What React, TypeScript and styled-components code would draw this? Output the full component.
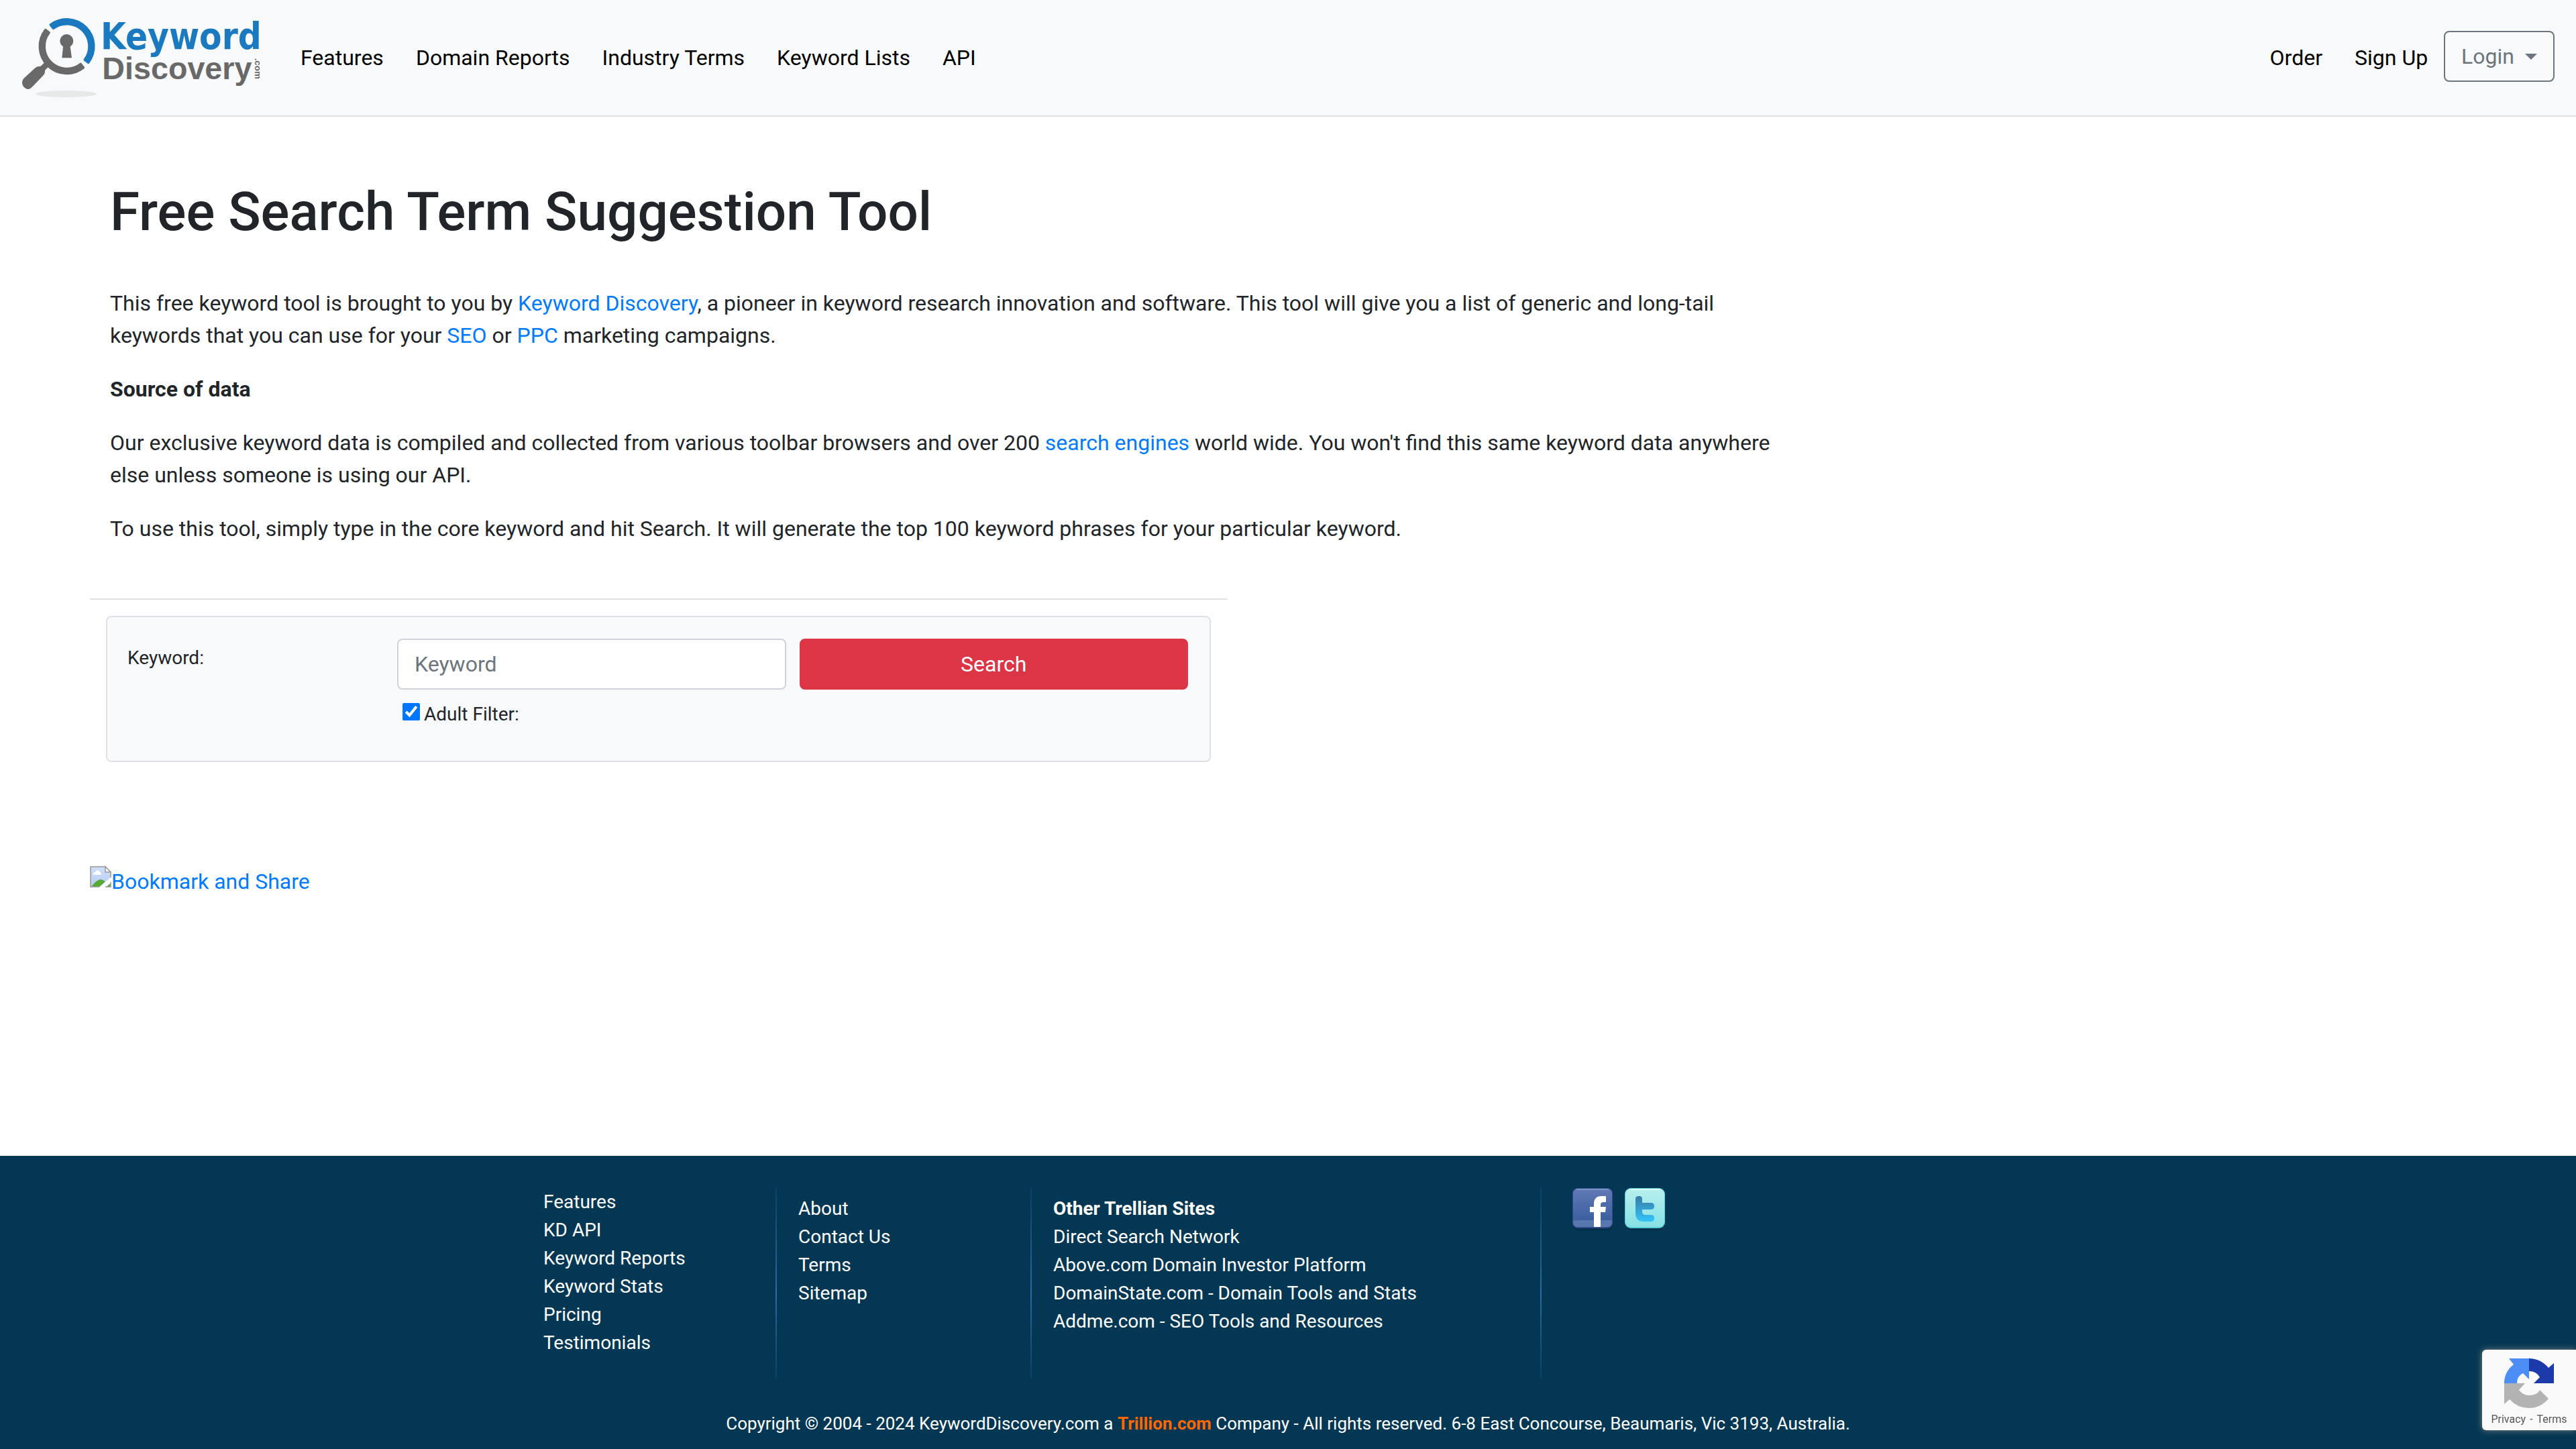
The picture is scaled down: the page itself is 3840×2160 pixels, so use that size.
import React from "react";
import styled, { createGlobalStyle } from "styled-components";

const GlobalStyle = createGlobalStyle`
  *, *::before, *::after { box-sizing: border-box; }
  body {
    margin: 0;
    background: #fff;
    color: #212529;
    font-family: Roboto, "Liberation Sans", sans-serif;
    font-size: 32px;
    line-height: 48px;
  }
`;

const Page = styled.div`
  display: flex;
  flex-direction: column;
  min-height: 100vh;
`;

const Header = styled.header`
  display: flex;
  align-items: center;
  padding: 16px 32px;
  background: #f8f9fa;
  border-bottom: 2px solid #dee2e6;
`;

const Brand = styled.a`
  display: flex;
  margin-right: 26px;
`;

const Nav = styled.nav<{ $end?: boolean }>`
  display: flex;
  align-items: center;
  margin-left: ${(p) => (p.$end ? "auto" : "0")};
`;

const NavLink = styled.a`
  padding: 16px 24px;
  color: #000;
  text-decoration: none;
`;

const LoginButton = styled.button`
  display: flex;
  align-items: center;
  gap: 16px;
  margin-bottom: 4px;
  padding: 12px 24px;
  border: 2px solid #6c757d;
  border-radius: 8px;
  background: transparent;
  color: #6c757d;
  font: inherit;
`;

const Caret = styled.span`
  border: 9px solid transparent;
  border-top-color: #6c757d;
  border-bottom: 0;
`;

const Main = styled.main`
  padding: 94px 134px;
`;

const Intro = styled.section`
  max-width: 2560px;
  padding: 0 30px;
`;

const Title = styled.h1`
  margin: 0 0 64px;
  font-size: 80px;
  line-height: 96px;
  font-weight: 500;
`;

const Paragraph = styled.p`
  margin: 0 0 32px;
`;

const Link = styled.a`
  color: #007bff;
  text-decoration: none;
`;

const ToolSection = styled.section`
  max-width: 1695px;
  margin-top: 80px;
  padding: 24px 24px 0;
  border-top: 2px solid #dee2e6;
`;

const SearchForm = styled.form`
  display: grid;
  grid-template-columns: 382px 1fr 1fr;
  column-gap: 20px;
  row-gap: 16px;
  align-items: start;
  padding: 32px 32px 48px 30px;
  border: 2px solid #dee2e6;
  border-radius: 8px;
  background: #f8f9fa;
`;

const FieldLabel = styled.label`
  padding-top: 8px;
  font-size: 28px;
  line-height: 42px;
`;

const KeywordInput = styled.input`
  min-width: 0;
  padding: 12px 24px;
  border: 2px solid #ced4da;
  border-radius: 8px;
  background: #fff;
  color: #495057;
  font: inherit;
  height: 76px;
  &::placeholder { color: #6c757d; opacity: 1; }
`;

const SearchButton = styled.button`
  height: 76px;
  padding: 12px 24px;
  border: 2px solid #dc3545;
  border-radius: 8px;
  background: #dc3545;
  color: #fff;
  font: inherit;
`;

const FilterLabel = styled.label`
  grid-column: 2;
  display: flex;
  align-items: flex-start;
  font-size: 28px;
  line-height: 42px;
`;

const Checkbox = styled.input`
  width: 26px;
  height: 26px;
  margin: 4px 6px 0 8px;
  accent-color: #0075ff;
`;

const ShareLink = styled(Link)`
  display: inline-flex;
  align-items: flex-start;
  margin-top: 154px;
`;

const Footer = styled.footer`
  margin-top: auto;
  padding: 48px 0 18px;
  background: #043753;
  color: #fff;
  font-size: 28px;
  line-height: 42px;
`;

const FooterGrid = styled.div`
  display: grid;
  grid-template-columns: 1fr 1fr 2fr 2fr;
  max-width: 2280px;
  min-height: 284px;
  margin: 0 auto 48px;
`;

const FooterColumn = styled.div<{ $top: number }>`
  display: flex;
  flex-direction: column;
  align-items: flex-start;
  margin-right: 2px;
  padding: ${(p) => p.$top}px 28px 0 30px;
  border-right: 2px solid;
  border-image: linear-gradient(#0c4063, #306aa4 55%, #0c4063) 1;
`;

const FooterLink = styled.a`
  color: #fff;
  text-decoration: none;
`;

const Social = styled.div`
  display: flex;
  align-items: flex-start;
  gap: 16px;
  padding-left: 43px;
`;

const SocialLink = styled.a`
  display: flex;
`;

const Copyright = styled.p`
  margin: 0;
  text-align: center;
  font-size: 26px;
  line-height: 39px;
`;

const Company = styled.a`
  color: #ff6600;
  font-weight: 700;
  text-decoration: none;
`;

const Captcha = styled.aside`
  position: fixed;
  right: 0;
  bottom: 28px;
  display: flex;
  flex-direction: column;
  align-items: center;
  width: 140px;
  height: 120px;
  padding-top: 12px;
  border-radius: 6px 0 0 6px;
  background: #f9f9f9;
  box-shadow: 0 0 10px #808080;
  color: #555;
  font-size: 16px;
  line-height: 20px;
`;

const CaptchaLinks = styled.div`
  display: flex;
  gap: 6px;
  margin-top: 6px;
`;

const CaptchaLink = styled.a`
  color: #555;
  text-decoration: none;
`;

const Logo = () => (
  <svg width="366" height="140" viewBox="36 18 1098 420" role="img" aria-label="Keyword Discovery">
    <ellipse cx="236" cy="390" rx="137" ry="15" fill="#e6e8e8" />
    <g strokeWidth="10" strokeLinejoin="round">
      <path
        d="M165.8 80.7A121 121 0 0 1 335 250.6L318.3 237.8A100 100 0 0 0 178.5 97.4Z"
        fill="#1b79c0"
        stroke="#1b79c0"
      />
      <path
        d="M143 103.2A121 121 0 0 0 313.4 272.5L300.5 255.9A100 100 0 0 1 159.7 116Z"
        fill="#696969"
        stroke="#696969"
      />
    </g>
    <g fill="#696969">
      <path d="M139 242L162 264L141 284V290Q141 300 134 307L82 361Q68 375 52 364L47 359Q34 344 42 327Q44 323 50 317L98 273Q106 266 116 267L122 266L142 247Z" />
      <circle cx="238" cy="153" r="30" />
      <path d="M223 172L217 229H261L253 172Z" />
    </g>
    <text
      x="390"
      y="190"
      fontFamily="DejaVu Sans Condensed, Open Sans, sans-serif"
      fontWeight="700"
      fontSize="163"
      fill="#1b79c0"
    >
      Keyword
    </text>
    <text x="397" y="323" fontFamily="Liberation Sans, sans-serif" fontWeight="700" fontSize="140" fill="#696969">
      Discovery
    </text>
    <text
      transform="translate(1081 230) rotate(90)"
      fontFamily="Liberation Sans, sans-serif"
      fontWeight="700"
      fontSize="40"
      fill="#696969"
    >
      .com
    </text>
  </svg>
);

const BrokenImage = () => (
  <svg width="32" height="34" viewBox="0 0 32 34" aria-hidden="true">
    <defs>
      <linearGradient id="sky" x1="0" y1="0" x2="0" y2="1">
        <stop offset="0" stopColor="#cfdffb" />
        <stop offset="1" stopColor="#b9cdf0" />
      </linearGradient>
    </defs>
    <path d="M1 2H23L31 10V32H1Z" fill="url(#sky)" />
    <path d="M5 14Q4 10 8 10Q11 5 14 9Q17 10 17 14Z" fill="#fff" />
    <path d="M2 32Q10 21 16 21Q19 21 23 24L15 32ZM24 32L31 27V32Z" fill="#57aa38" />
    <path d="M12 34L32 17V25L22 34Z" fill="#fff" />
    <path d="M14 32H1V2H23L31 10V18M31 25V32H23" fill="none" stroke="#999" strokeWidth="1.5" />
    <path d="M23 2V10H31Z" fill="#fff" stroke="#999" strokeWidth="1.5" />
  </svg>
);

const FacebookIcon = () => (
  <svg width="62" height="64" viewBox="0 0 62 64" aria-hidden="true">
    <defs>
      <linearGradient id="fb" x1="0" y1="0" x2="0" y2="1">
        <stop offset="0" stopColor="#6079b4" />
        <stop offset="1" stopColor="#355a9c" />
      </linearGradient>
    </defs>
    <rect x="1" y="3" width="60" height="60" rx="8" fill="#032f48" />
    <rect width="60" height="60" x="1" rx="8" fill="#354a8c" />
    <rect x="2" y="1" width="58" height="57" rx="7" fill="url(#fb)" />
    <path d="M2 48H60V51Q60 58 53 58H9Q2 58 2 51Z" fill="#5877ae" />
    <path d="M7 2H55" stroke="#7c93c6" strokeWidth="2" />
    <path d="M33 58V36H27V28H33V24Q33 12 44 12H51V21H47Q43 21 43 25V28H51L50 36H43V58Z" fill="#fff" />
  </svg>
);

const TwitterIcon = () => (
  <svg width="62" height="64" viewBox="0 0 62 64" aria-hidden="true">
    <defs>
      <linearGradient id="tw" x1="0" y1="0" x2="0" y2="1">
        <stop offset="0" stopColor="#b8eeee" />
        <stop offset="1" stopColor="#86e2e5" />
      </linearGradient>
      <linearGradient id="bird" x1="0" y1="0" x2="0" y2="1">
        <stop offset="0" stopColor="#3679a5" />
        <stop offset="1" stopColor="#35c5fa" />
      </linearGradient>
    </defs>
    <rect x="1" y="3" width="60" height="60" rx="9" fill="#032f48" />
    <rect x="1" width="60" height="60" rx="9" fill="#55cdd4" />
    <rect x="2" y="1" width="58" height="57" rx="8" fill="url(#tw)" />
    <path d="M8 2H54" stroke="#dcf8f8" strokeWidth="2" />
    <path
      d="M17 16Q17 12 22 12Q27 12 27 16V22H40Q45 22 45 27Q45 32 40 32H27V35Q27 40 32 40H40Q45 40 45 45Q45 50 40 50H29Q17 50 17 38Z"
      fill="url(#bird)"
    />
  </svg>
);

const CaptchaLogo = () => (
  <svg width="76" height="76" viewBox="0 0 76 76" aria-hidden="true">
    <path d="M38 1V32L29 23Q20 27 20 38H1Q1 21 15 10L8 1Z" fill="#4c8df6" />
    <path d="M38 1Q55 1 67 15L75 8V38H45L54 29Q49 20 38 20Z" fill="#1c3aa9" />
    <path d="M1 38H32L23 48Q29 56 38 56Q50 56 54 48L67 61Q55 75 38 75Q21 75 9 62L1 69Z" fill="#b3b3b3" />
  </svg>
);

const navItems = ["Features", "Domain Reports", "Industry Terms", "Keyword Lists", "API"];
const productLinks = ["Features", "KD API", "Keyword Reports", "Keyword Stats", "Pricing", "Testimonials"];
const companyLinks = ["About", "Contact Us", "Terms", "Sitemap"];
const siteLinks = [
  "Direct Search Network",
  "Above.com Domain Investor Platform",
  "DomainState.com - Domain Tools and Stats",
  "Addme.com - SEO Tools and Resources",
];

const footerLinks = (items: string[]) =>
  items.map((item) => (
    <FooterLink href="#" key={item}>
      {item}
    </FooterLink>
  ));

export default function App() {
  return (
    <Page>
      <GlobalStyle />
      <Header>
        <Brand href="#">
          <Logo />
        </Brand>
        <Nav>
          {navItems.map((item) => (
            <NavLink href="#" key={item}>
              {item}
            </NavLink>
          ))}
        </Nav>
        <Nav $end>
          <NavLink href="#">Order</NavLink>
          <NavLink href="#">Sign Up</NavLink>
          <LoginButton type="button">
            Login
            <Caret />
          </LoginButton>
        </Nav>
      </Header>

      <Main>
        <Intro>
          <Title>Free Search Term Suggestion Tool</Title>
          <Paragraph>
            This free keyword tool is brought to you by <Link href="#">Keyword Discovery</Link>, a pioneer in keyword
            research innovation and software. This tool will give you a list of generic and long-tail keywords that you
            can use for your <Link href="#">SEO</Link> or <Link href="#">PPC</Link> marketing campaigns.
          </Paragraph>
          <Paragraph>
            <strong>Source of data</strong>
          </Paragraph>
          <Paragraph>
            Our exclusive keyword data is compiled and collected from various toolbar browsers and over 200{" "}
            <Link href="#">search engines</Link> world wide. You won't find this same keyword data anywhere else unless
            someone is using our API.
          </Paragraph>
          <Paragraph>
            To use this tool, simply type in the core keyword and hit Search. It will generate the top 100 keyword
            phrases for your particular keyword.
          </Paragraph>
        </Intro>

        <ToolSection>
          <SearchForm onSubmit={(e) => e.preventDefault()}>
            <FieldLabel htmlFor="keyword">Keyword:</FieldLabel>
            <KeywordInput id="keyword" type="text" placeholder="Keyword" />
            <SearchButton type="submit">Search</SearchButton>
            <FilterLabel>
              <Checkbox type="checkbox" defaultChecked />
              Adult Filter:
            </FilterLabel>
          </SearchForm>
        </ToolSection>

        <ShareLink href="#">
          <BrokenImage />
          Bookmark and Share
        </ShareLink>
      </Main>

      <Footer>
        <FooterGrid>
          <FooterColumn $top={0}>{footerLinks(productLinks)}</FooterColumn>
          <FooterColumn $top={10}>{footerLinks(companyLinks)}</FooterColumn>
          <FooterColumn $top={10}>
            <strong>Other Trellian Sites</strong>
            {footerLinks(siteLinks)}
          </FooterColumn>
          <Social>
            <SocialLink href="#" aria-label="Facebook">
              <FacebookIcon />
            </SocialLink>
            <SocialLink href="#" aria-label="Twitter">
              <TwitterIcon />
            </SocialLink>
          </Social>
        </FooterGrid>
        <Copyright>
          Copyright © 2004 - 2024 KeywordDiscovery.com a <Company href="#">Trillion.com</Company> Company - All rights
          reserved. 6-8 East Concourse, Beaumaris, Vic 3193, Australia.
        </Copyright>
      </Footer>

      <Captcha>
        <CaptchaLogo />
        <CaptchaLinks>
          <CaptchaLink href="#">Privacy</CaptchaLink>
          <span>-</span>
          <CaptchaLink href="#">Terms</CaptchaLink>
        </CaptchaLinks>
      </Captcha>
    </Page>
  );
}
